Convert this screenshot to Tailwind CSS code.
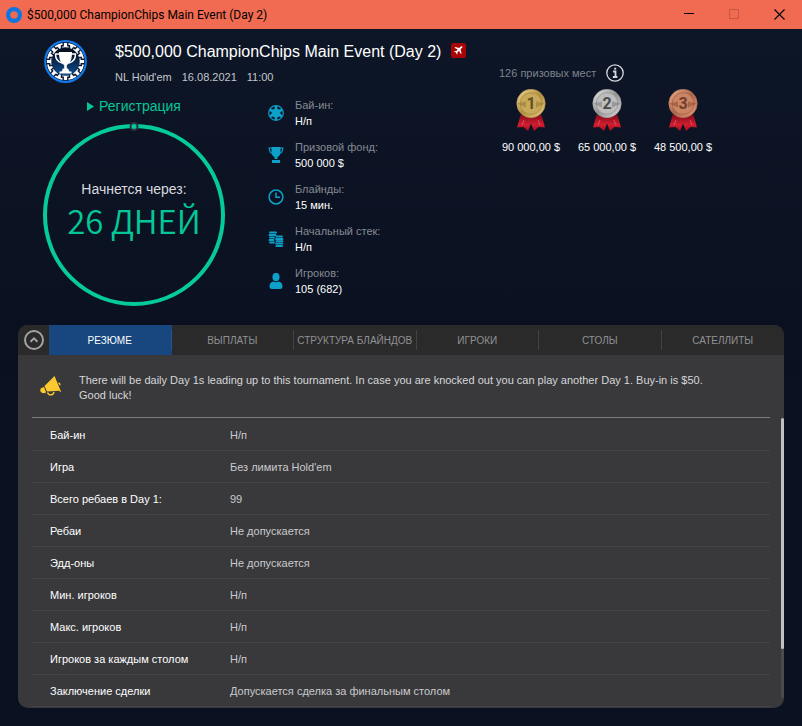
<!DOCTYPE html>
<html lang="ru">

<head>
    <meta charset="UTF-8">
    <meta name="viewport" content="width=device-width, initial-scale=1.0">
    <title>$500,000 ChampionChips Main Event (Day 2)</title>
    <script src="https://cdn.jsdelivr.net/npm/@tailwindcss/browser@4"></script>
</head>

<body class="min-h-screen flex flex-col bg-linear-to-b from-[#0d1627] via-[#0a1020] to-[#0a1120] font-['Liberation_Sans',Arial,sans-serif] text-[11px] leading-4 text-white">

    <!-- Title bar -->
    <header class="h-[29px] flex items-center bg-[#f06b51] text-black">
        <svg class="ml-[6px] size-4" viewBox="0 0 16 16" fill="none">
            <circle cx="8" cy="8" r="5.9" stroke="#0f75e0" stroke-width="4.2" />
        </svg>
        <p class="ml-[5px] flex-1 font-['Roboto',sans-serif] text-[12px]">$500,000 ChampionChips Main Event (Day 2)</p>
        <button aria-label="Свернуть" class="w-[45px] h-full flex items-center justify-center">
            <svg class="w-[11px] h-[11px]" viewBox="0 0 11 11" shape-rendering="crispEdges"><path d="M0 4h10v1H0z" /></svg>
        </button>
        <button aria-label="Развернуть" disabled class="w-[45px] h-full flex items-center justify-center">
            <svg class="w-[11px] h-[11px]" viewBox="0 0 11 11" fill="none"><path d="M.5.5h9v9h-9z" stroke="#c45743" /></svg>
        </button>
        <button aria-label="Закрыть" class="w-[45px] h-full flex items-center justify-center">
            <svg class="w-[11px] h-[11px]" viewBox="0 0 11 11" fill="none"><path d="M.5.5l10 10M10.5.5l-10 10" stroke="#000" stroke-width="1.1" /></svg>
        </button>
    </header>

    <!-- Tournament summary -->
    <section class="flex h-[296px] pt-[11px]">
        <div class="w-[493px] shrink-0">
            <div class="flex h-[45px] pl-11">
                <svg class="size-[43px] shrink-0" viewBox="0 0 43 43">
                    <defs>
                        <linearGradient id="chip" x1="0" y1="0" x2="0" y2="1">
                            <stop offset="0.2" stop-color="#071225" />
                            <stop offset="1" stop-color="#0c4f96" />
                        </linearGradient>
                        <path id="notch" d="M19.200 2.500v3.200h-1.700v2.600h8v-2.600h-1.700V2.500" />
                    </defs>
                    <circle cx="21.5" cy="21.5" r="20.3" fill="#081226" stroke="#1279ea" stroke-width="2.2" />
                    <circle cx="21.5" cy="21.5" r="16.2" fill="none" stroke="#fff" stroke-width="4.800" />
                    <g fill="none" stroke="#0a1a33" stroke-width="1.400">
                        <use href="#notch" />
                        <use href="#notch" transform="rotate(45 21.5 21.5)" />
                        <use href="#notch" transform="rotate(90 21.5 21.5)" />
                        <use href="#notch" transform="rotate(135 21.5 21.5)" />
                        <use href="#notch" transform="rotate(180 21.5 21.5)" />
                        <use href="#notch" transform="rotate(225 21.5 21.5)" />
                        <use href="#notch" transform="rotate(270 21.5 21.5)" />
                        <use href="#notch" transform="rotate(315 21.5 21.5)" />
                    </g>
                    <circle cx="21.5" cy="21.5" r="13.800" fill="url(#chip)" />
                    <path d="M15 12h13c0 7-1.300 11-5.200 13v3.500h1.200l1.500 3h2v2h-12v-2h2l1.500-3h1.200V25c-3.900-2-5.200-6-5.200-13z" fill="#fff" />
                    <path d="M16 14h-4.500c0 5 2.500 8 6.500 9M27 14h4.500c0 5-2.500 8-6.500 9" fill="none" stroke="#fff" stroke-width="1.5" />
                </svg>
                <div class="ml-7">
                    <div class="flex items-center gap-[10px]">
                        <h1 class="text-[16px] leading-6">$500,000 ChampionChips Main Event (Day 2)</h1>
                        <svg class="w-[15px] h-[15px] mb-[3px]" viewBox="0 0 15 15">
                            <rect width="15" height="15" rx="2.500" fill="#a90408" />
                            <path d="M11.300 3.500c-.6-.5-1.300-.2-1.900.4L8.200 5.100 4.300 4l-.8.8 3.200 1.700-1.600 1.700-1.500-.2-.6.600 1.900 1 1 2 .6-.6-.1-1.500 1.700-1.700 1.700 3.300.8-.8-1.100-4 1.300-1.200c.6-.6.900-1.200.5-1.600z" fill="#fff" />
                        </svg>
                    </div>
                    <p class="mt-[5px] flex gap-[10px] text-[#c3c5ca]">
                        <span>NL Hold'em</span><span>16.08.2021</span><span>11:00</span>
                    </p>
                </div>
            </div>

            <div class="mt-[11px] flex pl-[43px]">
                <!-- Countdown -->
                <div class="w-[182px] shrink-0">
                    <p class="flex items-center justify-center gap-[5px] text-[14px] leading-5 text-[#05c796]">
                        <svg class="w-[7px] h-[9px]" viewBox="0 0 7 9"><path d="M0 0l7 4.500L0 9z" fill="currentColor" /></svg>
                        Регистрация
                    </p>
                    <div class="relative mt-2 size-[182px] rounded-full border-4 border-[#05cb9b] flex flex-col items-center pt-[51px]">
                        <span class="absolute -top-[6px] left-1/2 -translate-x-1/2 size-[9px] rounded-full border-2 border-[#2b3440] bg-[#05cb9b]"></span>
                        <p class="text-[14px] leading-5 text-[#d9dadd]">Начнется через:</p>
                        <p class="font-['Noto_Sans_CJK_SC','Noto_Sans',sans-serif] font-[350] text-[33px] leading-[42px] whitespace-nowrap text-[#05c796]">26 ДНЕЙ</p>
                    </div>
                </div>

                <!-- Key figures -->
                <dl class="ml-[43px] mt-px flex flex-col gap-[10px] text-[#0da0c8]">
                    <div class="flex items-center gap-[11px]">
                        <svg class="size-4" viewBox="0 0 16 16">
                            <circle cx="8" cy="8" r="7.300" fill="none" stroke="currentColor" stroke-width="1.200" />
                            <circle cx="8" cy="8" r="4.500" fill="currentColor" />
                            <path d="M8 1v14M1.900 4.500l12.200 7M1.900 11.500l12.200-7" stroke="currentColor" stroke-width="2.600" />
                        </svg>
                        <div>
                            <dt class="text-[#868a92]">Бай-ин:</dt>
                            <dd class="text-white">Н/п</dd>
                        </div>
                    </div>
                    <div class="flex items-center gap-[11px]">
                        <svg class="size-4" viewBox="0 0 16 16" fill="currentColor">
                            <path d="M3.500 0h9v5c0 2.500-1 4-3 5v2h-3v-2c-2-1-3-2.500-3-5zM4 13h8v3H4z" />
                            <path d="M4 1H1.200c0 3 1 5 3.800 5.500M12 1h2.800c0 3-1 5-3.800 5.500" fill="none" stroke="currentColor" stroke-width="1.200" />
                        </svg>
                        <div>
                            <dt class="text-[#868a92]">Призовой фонд:</dt>
                            <dd class="text-white">500 000 $</dd>
                        </div>
                    </div>
                    <div class="flex items-center gap-[11px]">
                        <svg class="size-4" viewBox="0 0 16 16" fill="none" stroke="currentColor" stroke-width="1.500">
                            <circle cx="8" cy="8" r="6.900" />
                            <path d="M8 3.500v4.700h4" />
                        </svg>
                        <div>
                            <dt class="text-[#868a92]">Блайнды:</dt>
                            <dd class="text-white">15 мин.</dd>
                        </div>
                    </div>
                    <div class="flex items-center gap-[11px]">
                        <svg class="size-4" viewBox="0 0 16 16" fill="none" stroke="currentColor" stroke-width="1.900" stroke-linecap="round">
                            <path d="M2 1.500h6M1.500 4h6M2 6.500h4M1.500 9h4M2 11.500h4" />
                            <path d="M8.500 5.500H14M8 8h6.500M8.500 10.300h6M8 12.600h6.500M8.500 15h5.500" />
                        </svg>
                        <div>
                            <dt class="text-[#868a92]">Начальный стек:</dt>
                            <dd class="text-white">Н/п</dd>
                        </div>
                    </div>
                    <div class="flex items-center gap-[11px]">
                        <svg class="size-4" viewBox="0 0 16 16" fill="currentColor">
                            <ellipse cx="8" cy="4" rx="3.600" ry="4.200" />
                            <path d="M1.500 13.500c0-3 1.500-4.500 4-4.900 1.500 1 3.500 1 5 0 2.500.4 4 1.900 4 4.900 0 1.700-1 2.500-2.500 2.500H4c-1.500 0-2.500-.8-2.500-2.500z" />
                        </svg>
                        <div>
                            <dt class="text-[#868a92]">Игроков:</dt>
                            <dd class="text-white">105 (682)</dd>
                        </div>
                    </div>
                </dl>
            </div>
        </div>

        <!-- Prizes -->
        <div class="pt-6">
            <div class="flex items-center gap-[10px] pl-[6px] h-[18px] text-[#7f838c]">
                <p>126 призовых мест</p>
                <button aria-label="Информация о призах" class="size-[18px]">
                    <svg class="size-[18px]" viewBox="0 0 18 18" fill="none" stroke="#d5d7da">
                        <circle cx="9" cy="9" r="8.200" stroke-width="1.300" />
                        <path d="M7 7.500h2.500v5M6.800 13h4.600" stroke-width="1.800" />
                        <path d="M8.200 4.700h2" stroke-width="1.900" />
                    </svg>
                </button>
            </div>
            <svg class="absolute size-0" aria-hidden="true">
                <defs>
                    <linearGradient id="gold" x1="0" y1="0" x2="1" y2="1">
                        <stop offset="0" stop-color="#f3dc9a" />
                        <stop offset="0.5" stop-color="#b08d3f" />
                        <stop offset="1" stop-color="#ecd084" />
                    </linearGradient>
                    <linearGradient id="silver" x1="0" y1="0" x2="1" y2="1">
                        <stop offset="0" stop-color="#f0f0f0" />
                        <stop offset="0.5" stop-color="#929292" />
                        <stop offset="1" stop-color="#e0e0e0" />
                    </linearGradient>
                    <linearGradient id="bronze" x1="0" y1="0" x2="1" y2="1">
                        <stop offset="0" stop-color="#eeb597" />
                        <stop offset="0.5" stop-color="#aa6346" />
                        <stop offset="1" stop-color="#e6a183" />
                    </linearGradient>
                    <linearGradient id="ribbon" x1="0" y1="0" x2="0" y2="1">
                        <stop offset="0" stop-color="#86091a" />
                        <stop offset="0.6" stop-color="#d01f30" />
                        <stop offset="1" stop-color="#a80c1c" />
                    </linearGradient>
                    <g id="tails">
                        <path d="M4.500 26L1 38.500l6.500-.5 4.500 4 3-7.500 3 7.500 4.500-4 6.500.5L25.500 26z" fill="url(#ribbon)" />
                        <path d="M8 31l-2 5M22 31l2 5" stroke="#ee6670" stroke-width="1" opacity=".7" />
                    </g>
                </defs>
            </svg>
            <ol class="flex mt-[7px]">
                <li class="w-[76px] flex flex-col items-center">
                    <svg class="w-[30px] h-[42px]" viewBox="0 0 30 42">
                        <use href="#tails" />
                        <circle cx="15" cy="14.500" r="14.200" fill="url(#gold)" stroke="#b8994c" stroke-width=".6" />
                        <circle cx="15" cy="14.500" r="10.800" fill="#c9a95a" stroke="#a88a45" stroke-width=".8" />
                        <path d="M1 14.500L10 12.500v6zM29 14.500L20 12.500v6z" fill="#8a6b2a" opacity=".45" />
                        <text x="15" y="20" text-anchor="middle" class="font-['Roboto',sans-serif] font-bold text-[16px]" fill="#66501f">1</text>
                    </svg>
                    <p class="mt-2 whitespace-nowrap">90 000,00 $</p>
                </li>
                <li class="w-[76px] flex flex-col items-center">
                    <svg class="w-[30px] h-[42px]" viewBox="0 0 30 42">
                        <use href="#tails" />
                        <circle cx="15" cy="14.500" r="14.200" fill="url(#silver)" stroke="#a0a0a0" stroke-width=".6" />
                        <circle cx="15" cy="14.500" r="10.800" fill="#bdbdbd" stroke="#959595" stroke-width=".8" />
                        <path d="M1 14.500L10 12.500v6zM29 14.500L20 12.500v6z" fill="#6c6c6c" opacity=".45" />
                        <text x="15" y="20" text-anchor="middle" class="font-['Roboto',sans-serif] font-bold text-[16px]" fill="#4b4b4b">2</text>
                    </svg>
                    <p class="mt-2 whitespace-nowrap">65 000,00 $</p>
                </li>
                <li class="w-[76px] flex flex-col items-center">
                    <svg class="w-[30px] h-[42px]" viewBox="0 0 30 42">
                        <use href="#tails" />
                        <circle cx="15" cy="14.500" r="14.200" fill="url(#bronze)" stroke="#b37254" stroke-width=".6" />
                        <circle cx="15" cy="14.500" r="10.800" fill="#cb8464" stroke="#a5634a" stroke-width=".8" />
                        <path d="M1 14.500L10 12.500v6zM29 14.500L20 12.500v6z" fill="#80412a" opacity=".45" />
                        <text x="15" y="20" text-anchor="middle" class="font-['Roboto',sans-serif] font-bold text-[16px]" fill="#70402c">3</text>
                    </svg>
                    <p class="mt-2 whitespace-nowrap">48 500,00 $</p>
                </li>
            </ol>
        </div>
    </section>

    <!-- Details panel -->
    <main class="mx-[18px] mb-[18px] flex-1 flex flex-col rounded-[10px] overflow-hidden bg-[#39393c]">
        <nav class="flex h-[30px] bg-[#2a2a2b] text-[10px] text-[#919193]">
            <button aria-label="Скрыть" class="w-[31px] shrink-0 flex items-center justify-center">
                <svg class="size-5" viewBox="0 0 20 20" fill="none" stroke="#a3a3a4" stroke-width="2">
                    <circle cx="10" cy="10" r="9" />
                    <path d="M6.500 11.800L10 8.300l3.500 3.500" />
                </svg>
            </button>
            <button class="flex-1 basis-0 flex items-center bg-[#17477e] text-white">
                <span class="flex-1 pt-px">РЕЗЮМЕ</span><i class="w-px h-5 bg-[#2c568a]"></i>
            </button>
            <button class="flex-1 basis-0 flex items-center"><span class="flex-1 pt-px">ВЫПЛАТЫ</span><i class="w-px h-5 bg-[#434345]"></i></button>
            <button class="flex-1 basis-0 flex items-center whitespace-nowrap"><span class="flex-1 pt-px">СТРУКТУРА БЛАЙНДОВ</span><i class="w-px h-5 bg-[#434345]"></i></button>
            <button class="flex-1 basis-0 flex items-center"><span class="flex-1 pt-px">ИГРОКИ</span><i class="w-px h-5 bg-[#434345]"></i></button>
            <button class="flex-1 basis-0 flex items-center"><span class="flex-1 pt-px">СТОЛЫ</span><i class="w-px h-5 bg-[#434345]"></i></button>
            <button class="flex-1 basis-0 flex items-center"><span class="flex-1 pt-px">САТЕЛЛИТЫ</span></button>
        </nav>

        <div class="mx-[14px] h-[63px] flex items-center border-b border-[#7d7d80]">
            <svg class="ml-2 w-[22px] h-5 shrink-0" viewBox="0 0 22 20" fill="#fcc92f">
                <path d="M13.500 1l1-1 6.500 15.500-1 .5-.6-1.200L7 15.500 4.500 10z" />
                <path d="M4 11l2.200 5.500-2.500.7C1.500 17.500 0 15.500.300 13.800c.2-1.500 1.500-2.300 3.700-2.800z" />
                <path d="M7.500 16.500c1 3 5.500 3.500 6.500-.5M18.500 7c1.200.3 1.600 1.200 1.200 2.300" fill="none" stroke="#fcc92f" stroke-width="1.300" />
            </svg>
            <p class="ml-[17px] pt-1 leading-[15px] text-[#d6d7d9]">There will be daily Day 1s leading up to this tournament. In case you are knocked out you can play another Day 1. Buy-in is $50.<br>Good luck!</p>
        </div>

        <div class="flex flex-1">
            <table class="ml-[14px] w-full border-collapse text-left self-start">
                <tbody class="text-[#c9cacc] [&_td]:pt-[2px] [&_th]:pt-[2px] [&_th]:pl-[18px] [&_th]:font-normal [&_th]:text-white">
                    <tr class="h-8 border-b border-[#434447]"><th scope="row" class="w-[198px]">Бай-ин</th><td>Н/п</td></tr>
                    <tr class="h-8 border-b border-[#434447]"><th scope="row">Игра</th><td>Без лимита Hold'em</td></tr>
                    <tr class="h-8 border-b border-[#434447]"><th scope="row">Всего ребаев в Day 1:</th><td>99</td></tr>
                    <tr class="h-8 border-b border-[#434447]"><th scope="row">Ребаи</th><td>Не допускается</td></tr>
                    <tr class="h-8 border-b border-[#434447]"><th scope="row">Эдд-оны</th><td>Не допускается</td></tr>
                    <tr class="h-8 border-b border-[#434447]"><th scope="row">Мин. игроков</th><td>Н/п</td></tr>
                    <tr class="h-8 border-b border-[#434447]"><th scope="row">Макс. игроков</th><td>Н/п</td></tr>
                    <tr class="h-8 border-b border-[#434447]"><th scope="row">Игроков за каждым столом</th><td>Н/п</td></tr>
                    <tr class="h-8 border-b border-[#434447]"><th scope="row">Заключение сделки</th><td>Допускается сделка за финальным столом</td></tr>
                </tbody>
            </table>
            <!-- Scrollbar -->
            <div class="ml-[11px] mb-[10px] w-[3px] shrink-0 rounded-sm bg-[#4c4a4b]">
                <div class="h-[231px] rounded-sm bg-[#c1c1c2]"></div>
            </div>
        </div>
    </main>
</body>

</html>
